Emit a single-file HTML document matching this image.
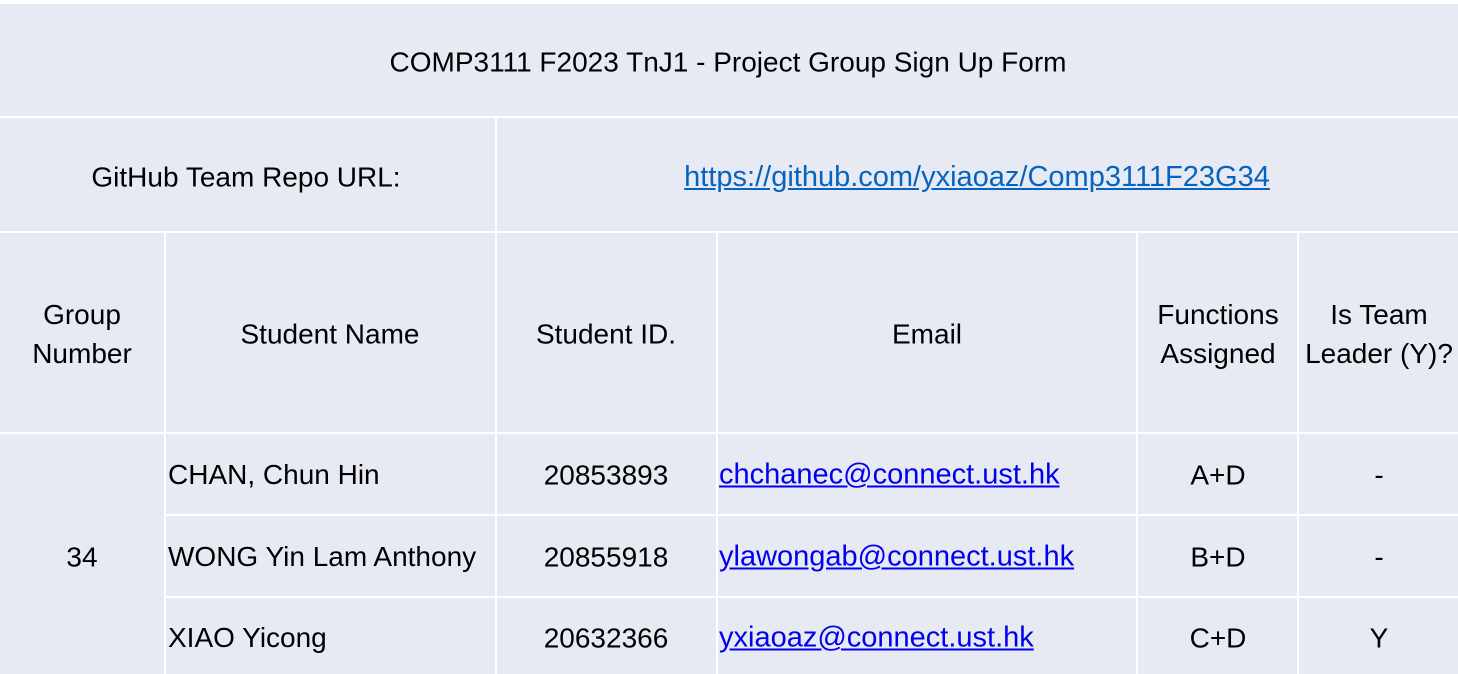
<!DOCTYPE html>
<html><head><meta charset="utf-8"><style>
body{margin:0;width:1458px;height:674px;background:#fff;position:relative;overflow:hidden;font-family:"Liberation Sans",sans-serif;color:#000}
.bg{position:absolute;left:0;top:4px;width:1458px;height:670px;background:#e8eaf3}
.h,.v{position:absolute;background:#fff}
.h{height:2px}.v{width:2px}
.t{position:absolute;font-size:28px;line-height:39px;white-space:nowrap;transform:translate(-50%,-50%);text-align:center}
.l{position:absolute;font-size:28px;white-space:nowrap;transform:translateY(-50%)}
a{text-decoration:underline;font-size:29px}
</style></head><body>
<div class="bg"></div>
<div class="h" style="left:0;top:116px;width:1458px"></div>
<div class="h" style="left:0;top:231px;width:1458px"></div>
<div class="h" style="left:0;top:432px;width:1458px"></div>
<div class="h" style="left:165px;top:514px;width:1293px"></div>
<div class="h" style="left:165px;top:596px;width:1293px"></div>
<div class="v" style="left:495px;top:118px;height:556px"></div>
<div class="v" style="left:164px;top:233px;height:441px"></div>
<div class="v" style="left:716px;top:233px;height:441px"></div>
<div class="v" style="left:1136px;top:233px;height:441px"></div>
<div class="v" style="left:1297px;top:233px;height:441px"></div>

<div class="t" style="left:728px;top:62px">COMP3111 F2023 TnJ1 - Project Group Sign Up Form</div>
<div class="t" style="left:246px;top:177px">GitHub Team Repo URL:</div>
<div class="t" style="left:977px;top:177px"><a style="color:#0563c1">https://github.com/yxiaoaz/Comp3111F23G34</a></div>

<div class="t" style="left:82px;top:334px">Group<br>Number</div>
<div class="t" style="left:330px;top:334px">Student Name</div>
<div class="t" style="left:606px;top:334px">Student ID.</div>
<div class="t" style="left:927px;top:334px">Email</div>
<div class="t" style="left:1218px;top:334px">Functions<br>Assigned</div>
<div class="t" style="left:1379px;top:334px">Is Team<br>Leader (Y)?</div>

<div class="t" style="left:82px;top:557px">34</div>
<div class="l" style="left:168px;top:475px">CHAN, Chun Hin</div>
<div class="l" style="left:168px;top:557px">WONG Yin Lam Anthony</div>
<div class="l" style="left:168px;top:638px">XIAO Yicong</div>
<div class="t" style="left:606px;top:475px">20853893</div>
<div class="t" style="left:606px;top:557px">20855918</div>
<div class="t" style="left:606px;top:638px">20632366</div>
<div class="l" style="left:719px;top:475px"><a style="color:#0000ee">chchanec@connect.ust.hk</a></div>
<div class="l" style="left:719px;top:557px"><a style="color:#0000ee">ylawongab@connect.ust.hk</a></div>
<div class="l" style="left:719px;top:638px"><a style="color:#0000ee">yxiaoaz@connect.ust.hk</a></div>
<div class="t" style="left:1218px;top:475px">A+D</div>
<div class="t" style="left:1218px;top:557px">B+D</div>
<div class="t" style="left:1218px;top:638px">C+D</div>
<div class="t" style="left:1379px;top:475px">-</div>
<div class="t" style="left:1379px;top:557px">-</div>
<div class="t" style="left:1379px;top:638px">Y</div>
</body></html>
